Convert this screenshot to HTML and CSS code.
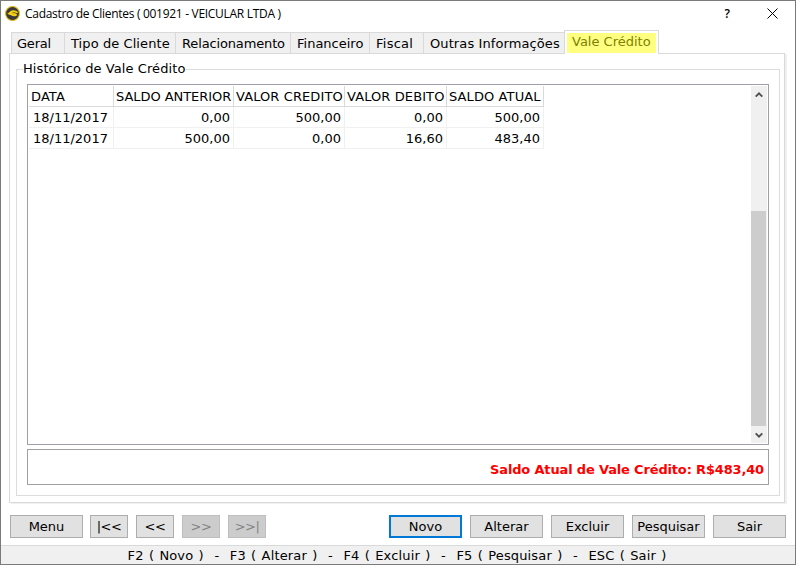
FILE: index.html
```
<!DOCTYPE html>
<html lang="pt-BR">
<head>
<meta charset="utf-8">
<title>Cadastro de Clientes</title>
<link rel="stylesheet" href="styles.css">
</head>
<body>
<div class="window">
  <header class="titlebar">
    <svg class="logo" viewBox="0 0 14 14"><circle cx="7" cy="7" r="6.5" fill="#393939" stroke="#e5b916" stroke-width="1"/><path d="M2 6.8C4.2 7 4.5 4.1 7.5 4C9.8 3.9 11.5 5 12.3 6.3L9.5 7.1L11.6 8.1C10.4 9.9 7.5 10 6 8.9C4.6 8.2 3.4 8.4 2 6.8Z" fill="#f4cf13"/><path d="M7 6.2L10 6.4" stroke="#6b5b12" stroke-width=".8"/></svg>
    <span class="title">Cadastro de Clientes ( 001921 - VEICULAR LTDA )</span>
    <span class="help">?</span>
    <svg class="close" viewBox="0 0 11 11"><path d="M.5 .5L10.5 10.5M10.5 .5L.5 10.5" stroke="#000" stroke-width="1"/></svg>
  </header>
  <nav class="tabs">
    <span class="tab t1">Geral</span><span class="tab t2">Tipo de Cliente</span><span class="tab t3">Relacionamento</span><span class="tab t4">Financeiro</span><span class="tab t5">Fiscal</span><span class="tab t6">Outras Informações</span><span class="tab active"><mark>Vale Crédito</mark></span>
  </nav>
  <main class="page">
    <fieldset class="group">
      <legend>Histórico de Vale Crédito</legend>
      <div class="list">
        <div class="grid">
          <div class="row head"><span>DATA</span><span class="tight">SALDO ANTERIOR</span><span>VALOR CREDITO</span><span>VALOR DEBITO</span><span>SALDO ATUAL</span></div>
          <div class="row"><span>18/11/2017</span><span>0,00</span><span>500,00</span><span>0,00</span><span>500,00</span></div>
          <div class="row"><span>18/11/2017</span><span>500,00</span><span>0,00</span><span>16,60</span><span>483,40</span></div>
        </div>
        <div class="scrollbar">
          <svg class="arrow" viewBox="0 0 8 6"><path d="M.7 4.7L4 1.4L7.3 4.7" fill="none" stroke="#505050" stroke-width="1.9"/></svg>
          <div class="thumb"></div>
          <svg class="arrow" viewBox="0 0 8 6"><path d="M.7 1.3L4 4.6L7.3 1.3" fill="none" stroke="#505050" stroke-width="1.9"/></svg>
        </div>
      </div>
      <div class="balance">Saldo Atual de Vale Crédito: R$483,40</div>
    </fieldset>
  </main>
  <div class="actions">
    <button class="menu">Menu</button><button class="nav">|&lt;&lt;</button><button class="nav">&lt;&lt;</button><button class="nav" disabled>&gt;&gt;</button><button class="nav" disabled>&gt;&gt;|</button>
    <button class="primary">Novo</button><button>Alterar</button><button>Excluir</button><button>Pesquisar</button><button>Sair</button>
  </div>
  <footer class="status"><span>F2 ( Novo )&nbsp; -&nbsp; F3 ( Alterar )&nbsp; -&nbsp; F4 ( Excluir )&nbsp; -&nbsp; F5 ( Pesquisar )&nbsp; -&nbsp; ESC ( Sair )</span></footer>
</div>
</body>
</html>
```
FILE: styles.css
```
* { box-sizing: border-box; }
body { margin: 0; background: #fff; color: #000; font: 13px/16px "DejaVu Sans", Verdana, sans-serif; }
.window { width: 796px; height: 565px; border: 1px solid #7a7a7a; display: flex; flex-direction: column; overflow: hidden; white-space: nowrap; }
.titlebar { height: 29px; flex: none; display: flex; align-items: flex-start; padding: 5px 17px 0 4px; font: 12px/15px "Open Sans", sans-serif; }
.logo { width: 15px; height: 15px; }
.title { margin-left: 5px; letter-spacing: -.3px; }
.help { margin-left: auto; font-weight: 600; }
.close { width: 11px; height: 11px; margin: 2px 0 0 37px; }
.tabs { height: 23px; flex: none; display: flex; align-items: flex-end; padding-left: 10px; }
.tab { height: 21px; background: #f0f0f0; border: 1px solid #d9d9d9; border-width: 1px 0 0 1px; padding: 3px 0 0 5px; }
.t1 { width: 53px; letter-spacing: -.2px; }
.t2 { width: 111px; padding-left: 6px; letter-spacing: .08px; }
.t3 { width: 115px; padding-left: 6px; letter-spacing: -.14px; }
.t4 { width: 79px; padding-left: 6px; }
.t5 { width: 54px; padding-left: 6px; letter-spacing: .25px; }
.t6 { width: 141px; padding-left: 6px; letter-spacing: .1px; }
.active { width: 95px; height: 24px; margin-bottom: -1px; background: #fff; border-width: 1px 1px 0; padding: 2px 2px 0; position: relative; }
mark { display: block; width: 89px; height: 20px; background: #ffff80; color: #808000; padding: 1px 0 0 5px; }
.page { width: 776px; height: 450px; flex: none; margin-left: 8px; border: 1px solid #d9d9d9; box-shadow: 2px 1px #f0f0f0; padding: 7px 4px 6px 6px; }
.group { width: 764px; height: 435px; margin: 0; border: 1px solid #dcdcdc; padding: 7px 10px; min-width: 0; }
legend { margin-left: -4px; padding: 0 1px 0 0; height: 16px; letter-spacing: .08px; }
.list { width: 742px; height: 361px; border: 1px solid #a0a0a8; padding: 1px; display: flex; justify-content: space-between; }
.row { display: grid; grid-template-columns: 85px 120px 111px 102px 97px; height: 21px; }
.row span { border-right: 1px solid #f0f0f0; border-bottom: 1px solid #f0f0f0; text-align: right; padding: 3px 3px 0 0; }
.row span:first-child { text-align: left; padding-left: 4px; }
.row.head span { border-color: #d9d9d9; text-align: left; padding: 3px 0 0 2px; letter-spacing: .1px; }
.row.head .tight { letter-spacing: -.05px; }
.scrollbar { width: 16px; background: #f0f0f0; display: flex; flex-direction: column; align-items: center; padding: 6px 1px 5px 0; }
.arrow { width: 8px; height: 6px; }
.thumb { width: 15px; height: 215px; background: #cdcdcd; margin: auto 0 6px; }
.balance { width: 742px; height: 36px; margin-top: 4px; border: 1px solid #a0a0a0; padding: 12px 4px 0 0; text-align: right; font-weight: bold; color: #f00; letter-spacing: -.16px; }
.actions { height: 42px; flex: none; display: flex; padding: 12px 1px 0 9px; }
button { width: 73px; height: 23px; margin: 0 8px 0 0; padding: 0; border: 1px solid #adadad; background: #e1e1e1; color: #000; font: inherit; }
.menu { margin-right: 7px; }
.nav { width: 38px; letter-spacing: -.5px; }
button:disabled { background: #ccc; border-color: #bfbfbf; color: #838383; }
.primary { margin-left: auto; border: 2px solid #0078d7; }
.status { flex: 1; border-top: 1px solid #d9d9d9; background: #f0f0f0; text-align: center; padding: 2px 2px 0 0; letter-spacing: .15px; word-spacing: 1px; }
```
